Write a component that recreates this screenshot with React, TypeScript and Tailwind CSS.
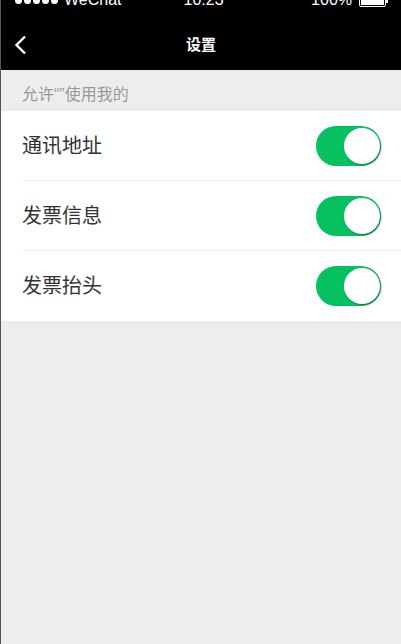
import React from 'react';

const font = { fontFamily: '"Liberation Sans", "Noto Sans CJK SC", sans-serif' };

function Toggle() {
  return (
    <div className="w-[65px] h-[40px] rounded-full bg-[#07c160] flex items-center justify-end pr-[1px]">
      <div className="w-[36px] h-[36px] rounded-full bg-white shadow-[1px_1px_2px_rgba(0,90,40,0.7)]" />
    </div>
  );
}

const rows = ['通讯地址', '发票信息', '发票抬头'];

export default function App() {
  return (
    <div className="w-[401px] min-h-[644px] bg-[#ededed] border-l border-[#555]" style={font}>
      <header className="h-[70px] bg-black text-white flex flex-col overflow-hidden">
        <div className="-mt-[10px] h-[20px] flex items-center px-[14px] text-[16px] leading-[20px]">
          <div className="flex items-center gap-[2px]">
            {[0, 1, 2, 3, 4].map((i) => (
              <span key={i} className="w-[7px] h-[7px] rounded-full bg-white inline-block" />
            ))}
          </div>
          <span className="ml-[6px]">WeChat</span>
          <span className="ml-[62px]">10:23</span>
          <span className="ml-auto">100%</span>
          <div className="ml-[7px] flex items-center mr-[-1px]">
            <div className="w-[27px] h-[13px] border border-white rounded-[2px] p-[1px]">
              <div className="w-full h-full bg-white" />
            </div>
            <div className="w-[2px] h-[5px] bg-white" />
          </div>
        </div>
        <div className="mt-[10px] h-[50px] flex items-center relative">
          <svg className="ml-[13px]" width="14" height="20" viewBox="0 0 14 20">
            <path d="M11 1.5 L2.5 10 L11 18.5" fill="none" stroke="white" strokeWidth="2.4" />
          </svg>
          <span className="absolute left-1/2 -translate-x-1/2 text-[15px] font-bold">设置</span>
        </div>
      </header>
      <div className="h-[41px] pl-[21px] pt-[13px] text-[16px] leading-[24px] text-[#999]">允许“”使用我的</div>
      <div className="bg-white">
        {rows.map((r, i) => (
          <div key={r} className={`ml-[21px] pr-[20px] h-[70px] flex items-center justify-between ${i < rows.length - 1 ? 'border-b border-[#f0f0f0]' : ''}`}>
            <span className="text-[20px] text-[#333]">{r}</span>
            <Toggle />
          </div>
        ))}
      </div>
    </div>
  );
}
